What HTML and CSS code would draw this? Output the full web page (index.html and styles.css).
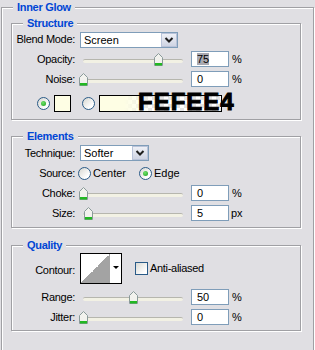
FILE: index.html
```html
<!DOCTYPE html>
<html>
<head>
<meta charset="utf-8">
<link rel="stylesheet" href="styles.css">
</head>
<body>
<fieldset class="grp outer">
  <legend>Inner Glow</legend>

  <fieldset class="grp inner structure">
    <legend>Structure</legend>
    <div class="row r-first">
      <span class="lbl">Blend Mode:</span>
      <div class="select w-blend"><span class="sel-text">Screen</span><span class="sel-btn"><svg width="14" height="12" viewBox="0 0 14 12"><polyline points="3.5,4 7,7.5 10.5,4" fill="none" stroke="#1e1e1e" stroke-width="2"/></svg></span></div>
    </div>
    <div class="row">
      <span class="lbl">Opacity:</span>
      <div class="slider" style="--v:75"><div class="track"></div><span class="thumb"><svg width="9" height="13" viewBox="0 0 9 13"><path d="M0.5 12.5V4.5L4.5 0.5L8.5 4.5V12.5Z" fill="#f2f2ee" stroke="#8a9a9a"/><rect x="1" y="10" width="7" height="2.5" fill="#22b822"/></svg></span></div>
      <span class="num"><span class="hl">75</span></span>
      <span class="unit">%</span>
    </div>
    <div class="row">
      <span class="lbl">Noise:</span>
      <div class="slider" style="--v:0"><div class="track"></div><span class="thumb"><svg width="9" height="13" viewBox="0 0 9 13"><path d="M0.5 12.5V4.5L4.5 0.5L8.5 4.5V12.5Z" fill="#f2f2ee" stroke="#8a9a9a"/><rect x="1" y="10" width="7" height="2.5" fill="#22b822"/></svg></span></div>
      <span class="num">0</span>
      <span class="unit">%</span>
    </div>
    <div class="row r-color">
      <span class="radio on r-c1"></span>
      <span class="swatch"></span>
      <span class="radio r-c2"></span>
      <div class="grad"><span class="hex">FEFEE4</span></div>
    </div>
  </fieldset>

  <fieldset class="grp inner elements">
    <legend>Elements</legend>
    <div class="row">
      <span class="lbl">Technique:</span>
      <div class="select w-tech"><span class="sel-text">Softer</span><span class="sel-btn"><svg width="14" height="12" viewBox="0 0 14 12"><polyline points="3.5,4 7,7.5 10.5,4" fill="none" stroke="#1e1e1e" stroke-width="2"/></svg></span></div>
    </div>
    <div class="row">
      <span class="lbl">Source:</span>
      <span class="opt opt-center"><span class="radio"></span><span class="opt-text">Center</span></span>
      <span class="opt"><span class="radio on"></span><span class="opt-text">Edge</span></span>
    </div>
    <div class="row">
      <span class="lbl">Choke:</span>
      <div class="slider" style="--v:0"><div class="track"></div><span class="thumb"><svg width="9" height="13" viewBox="0 0 9 13"><path d="M0.5 12.5V4.5L4.5 0.5L8.5 4.5V12.5Z" fill="#f2f2ee" stroke="#8a9a9a"/><rect x="1" y="10" width="7" height="2.5" fill="#22b822"/></svg></span></div>
      <span class="num">0</span>
      <span class="unit">%</span>
    </div>
    <div class="row">
      <span class="lbl">Size:</span>
      <div class="slider" style="--v:5"><div class="track"></div><span class="thumb"><svg width="9" height="13" viewBox="0 0 9 13"><path d="M0.5 12.5V4.5L4.5 0.5L8.5 4.5V12.5Z" fill="#f2f2ee" stroke="#8a9a9a"/><rect x="1" y="10" width="7" height="2.5" fill="#22b822"/></svg></span></div>
      <span class="num">5</span>
      <span class="unit unit-px">px</span>
    </div>
  </fieldset>

  <fieldset class="grp inner quality">
    <legend>Quality</legend>
    <div class="row r-contour">
      <span class="lbl lbl-contour">Contour:</span>
      <div class="contour"><span class="curve"></span><span class="c-arrow"><span class="tri"></span></span></div>
      <span class="check"></span>
      <span class="check-text">Anti-aliased</span>
    </div>
    <div class="row">
      <span class="lbl">Range:</span>
      <div class="slider" style="--v:50"><div class="track"></div><span class="thumb"><svg width="9" height="13" viewBox="0 0 9 13"><path d="M0.5 12.5V4.5L4.5 0.5L8.5 4.5V12.5Z" fill="#f2f2ee" stroke="#8a9a9a"/><rect x="1" y="10" width="7" height="2.5" fill="#22b822"/></svg></span></div>
      <span class="num">50</span>
      <span class="unit">%</span>
    </div>
    <div class="row">
      <span class="lbl">Jitter:</span>
      <div class="slider" style="--v:0"><div class="track"></div><span class="thumb"><svg width="9" height="13" viewBox="0 0 9 13"><path d="M0.5 12.5V4.5L4.5 0.5L8.5 4.5V12.5Z" fill="#f2f2ee" stroke="#8a9a9a"/><rect x="1" y="10" width="7" height="2.5" fill="#22b822"/></svg></span></div>
      <span class="num">0</span>
      <span class="unit">%</span>
    </div>
  </fieldset>
</fieldset>
</body>
</html>
```

FILE: styles.css
```css
html, body {
  margin: 0;
  height: 350px;
  overflow: hidden;
  background: #e0dfe3;
}
body {
  font: 11px/13px "Liberation Sans", Arial, sans-serif;
  color: #000;
}
.grp {
  border: 1px solid #a0a0a4;
  box-shadow: inset 1px 1px 0 #fff, 1px 1px 0 #fff;
  margin: 0;
  min-width: 0;
  box-sizing: border-box;
}
.grp > legend {
  font-weight: bold;
  color: #0046d5;
  line-height: 13px;
  padding: 0 4px;
  background: #e0dfe3;
  letter-spacing: -0.3px;
}
.outer {
  margin: 1px 0 0 1px;
  width: 313px;
  height: 350px;
  padding: 3px 12px 0 9px;
}
.outer > legend { margin-left: 2px; }
.inner {
  width: 290px;
  padding: 0;
}
.inner > legend { margin-left: 11px; }
.structure { padding-bottom: 2px; }
.elements { margin-top: 10px; padding-bottom: 4px; }
.quality { margin-top: 11px; padding-bottom: 3px; }

.row {
  display: flex;
  align-items: center;
  height: 20px;
}
.r-first { height: 19px; }
.lbl {
  width: 63px;
  flex: none;
  text-align: right;
  white-space: nowrap;
  letter-spacing: -0.3px;
}

/* select */
.select {
  margin-left: 5px;
  height: 16px;
  box-sizing: border-box;
  border: 1px solid #7f9db9;
  background: #fff;
  display: flex;
}
.w-blend { width: 98px; }
.w-tech { width: 69px; }
.sel-text {
  flex: 1;
  padding-left: 3px;
  line-height: 14px;
}
.sel-btn {
  width: 16px;
  height: 14px;
  box-sizing: border-box;
  border: 1px solid #b9c3d9;
  background: linear-gradient(#eef0f6, #cfd4e3);
  display: flex;
  align-items: center;
  justify-content: center;
}

/* slider */
.slider {
  position: relative;
  margin-left: 4px;
  width: 108px;
  height: 13px;
  flex: none;
  display: flex;
  align-items: center;
}
.track {
  margin: 0 4px;
  margin-top: 3px;
  flex: 1;
  height: 3px;
  background: #f2f1e4;
  border-top: 1px solid #b6b6ae;
  border-radius: 2px;
}
.thumb {
  position: absolute;
  top: 0;
  left: calc(var(--v) * 1px);
  width: 9px;
  height: 13px;
  display: block;
}
.thumb svg { display: block; }

/* number box */
.num {
  margin-left: 4px;
  width: 38px;
  height: 16px;
  box-sizing: border-box;
  border: 1px solid #7f9db9;
  background: #fff;
  padding-left: 5px;
  line-height: 14px;
  flex: none;
}
.hl { background: #a9a9b2; }
.unit { margin-left: 3px; }
.unit-px { margin-left: 2px; }

/* radios */
.radio {
  width: 13px;
  height: 13px;
  box-sizing: border-box;
  border-radius: 50%;
  border: 1px solid #2a5b88;
  background: linear-gradient(135deg, #d6d6d0, #fff 75%);
  display: flex;
  align-items: center;
  justify-content: center;
  flex: none;
}
.radio.on::after {
  content: "";
  width: 5px;
  height: 5px;
  border-radius: 50%;
  background: radial-gradient(circle at 40% 35%, #6fe36a, #1c9e1c);
}

.r-color { height: 28px; }
.r-c1 { margin-left: 25px; }
.swatch {
  margin-left: 4px;
  width: 17px;
  height: 17px;
  box-sizing: border-box;
  border: 1px solid #000;
  background: #fefee4;
  flex: none;
}
.r-c2 { margin-left: 11px; }
.grad {
  position: relative;
  margin-left: 4px;
  width: 123px;
  height: 17px;
  box-sizing: border-box;
  border: 1px solid #000;
  background:
    linear-gradient(to right, #fefee4 20%, rgba(254, 254, 228, 0) 45%),
    conic-gradient(#e4e4e4 25%, #fff 0 50%, #e4e4e4 0 75%, #fff 0) 0 0 / 8px 8px;
  flex: none;
}
.hex {
  position: absolute;
  left: 38px;
  top: -6px;
  font: bold 24px/24px "Liberation Sans", Arial, sans-serif;
  letter-spacing: 1px;
  color: #000;
  -webkit-text-stroke: 1px #000;
  white-space: nowrap;
}

/* source options */
.opt {
  display: flex;
  align-items: center;
  flex: none;
}
.opt-center { margin-left: 3px; width: 61px; }
.opt-text { margin-left: 2px; }

/* contour */
.r-contour {
  height: 35px;
  align-items: flex-start;
}
.lbl-contour { margin-top: 12px; }
.contour {
  margin-left: 5px;
  margin-top: 1px;
  width: 42px;
  height: 31px;
  box-sizing: border-box;
  border: 1px solid #000;
  background: #fff;
  display: flex;
  flex: none;
}
.curve {
  width: 29px;
  height: 29px;
  background: linear-gradient(to bottom right, #fff 50%, #a3a3a3 50%);
  flex: none;
}
.c-arrow {
  flex: 1;
  display: flex;
  justify-content: center;
  padding-top: 12px;
}
.tri {
  width: 0;
  height: 0;
  border-left: 3px solid transparent;
  border-right: 3px solid transparent;
  border-top: 3px solid #000;
}
.check {
  margin-left: 13px;
  margin-top: 10px;
  width: 13px;
  height: 13px;
  box-sizing: border-box;
  border: 1px solid #2a5b88;
  background: linear-gradient(135deg, #d9d9d3, #fff 80%);
  flex: none;
}
.check-text {
  margin-left: 2px;
  margin-top: 10px;
  letter-spacing: -0.3px;
}
```
